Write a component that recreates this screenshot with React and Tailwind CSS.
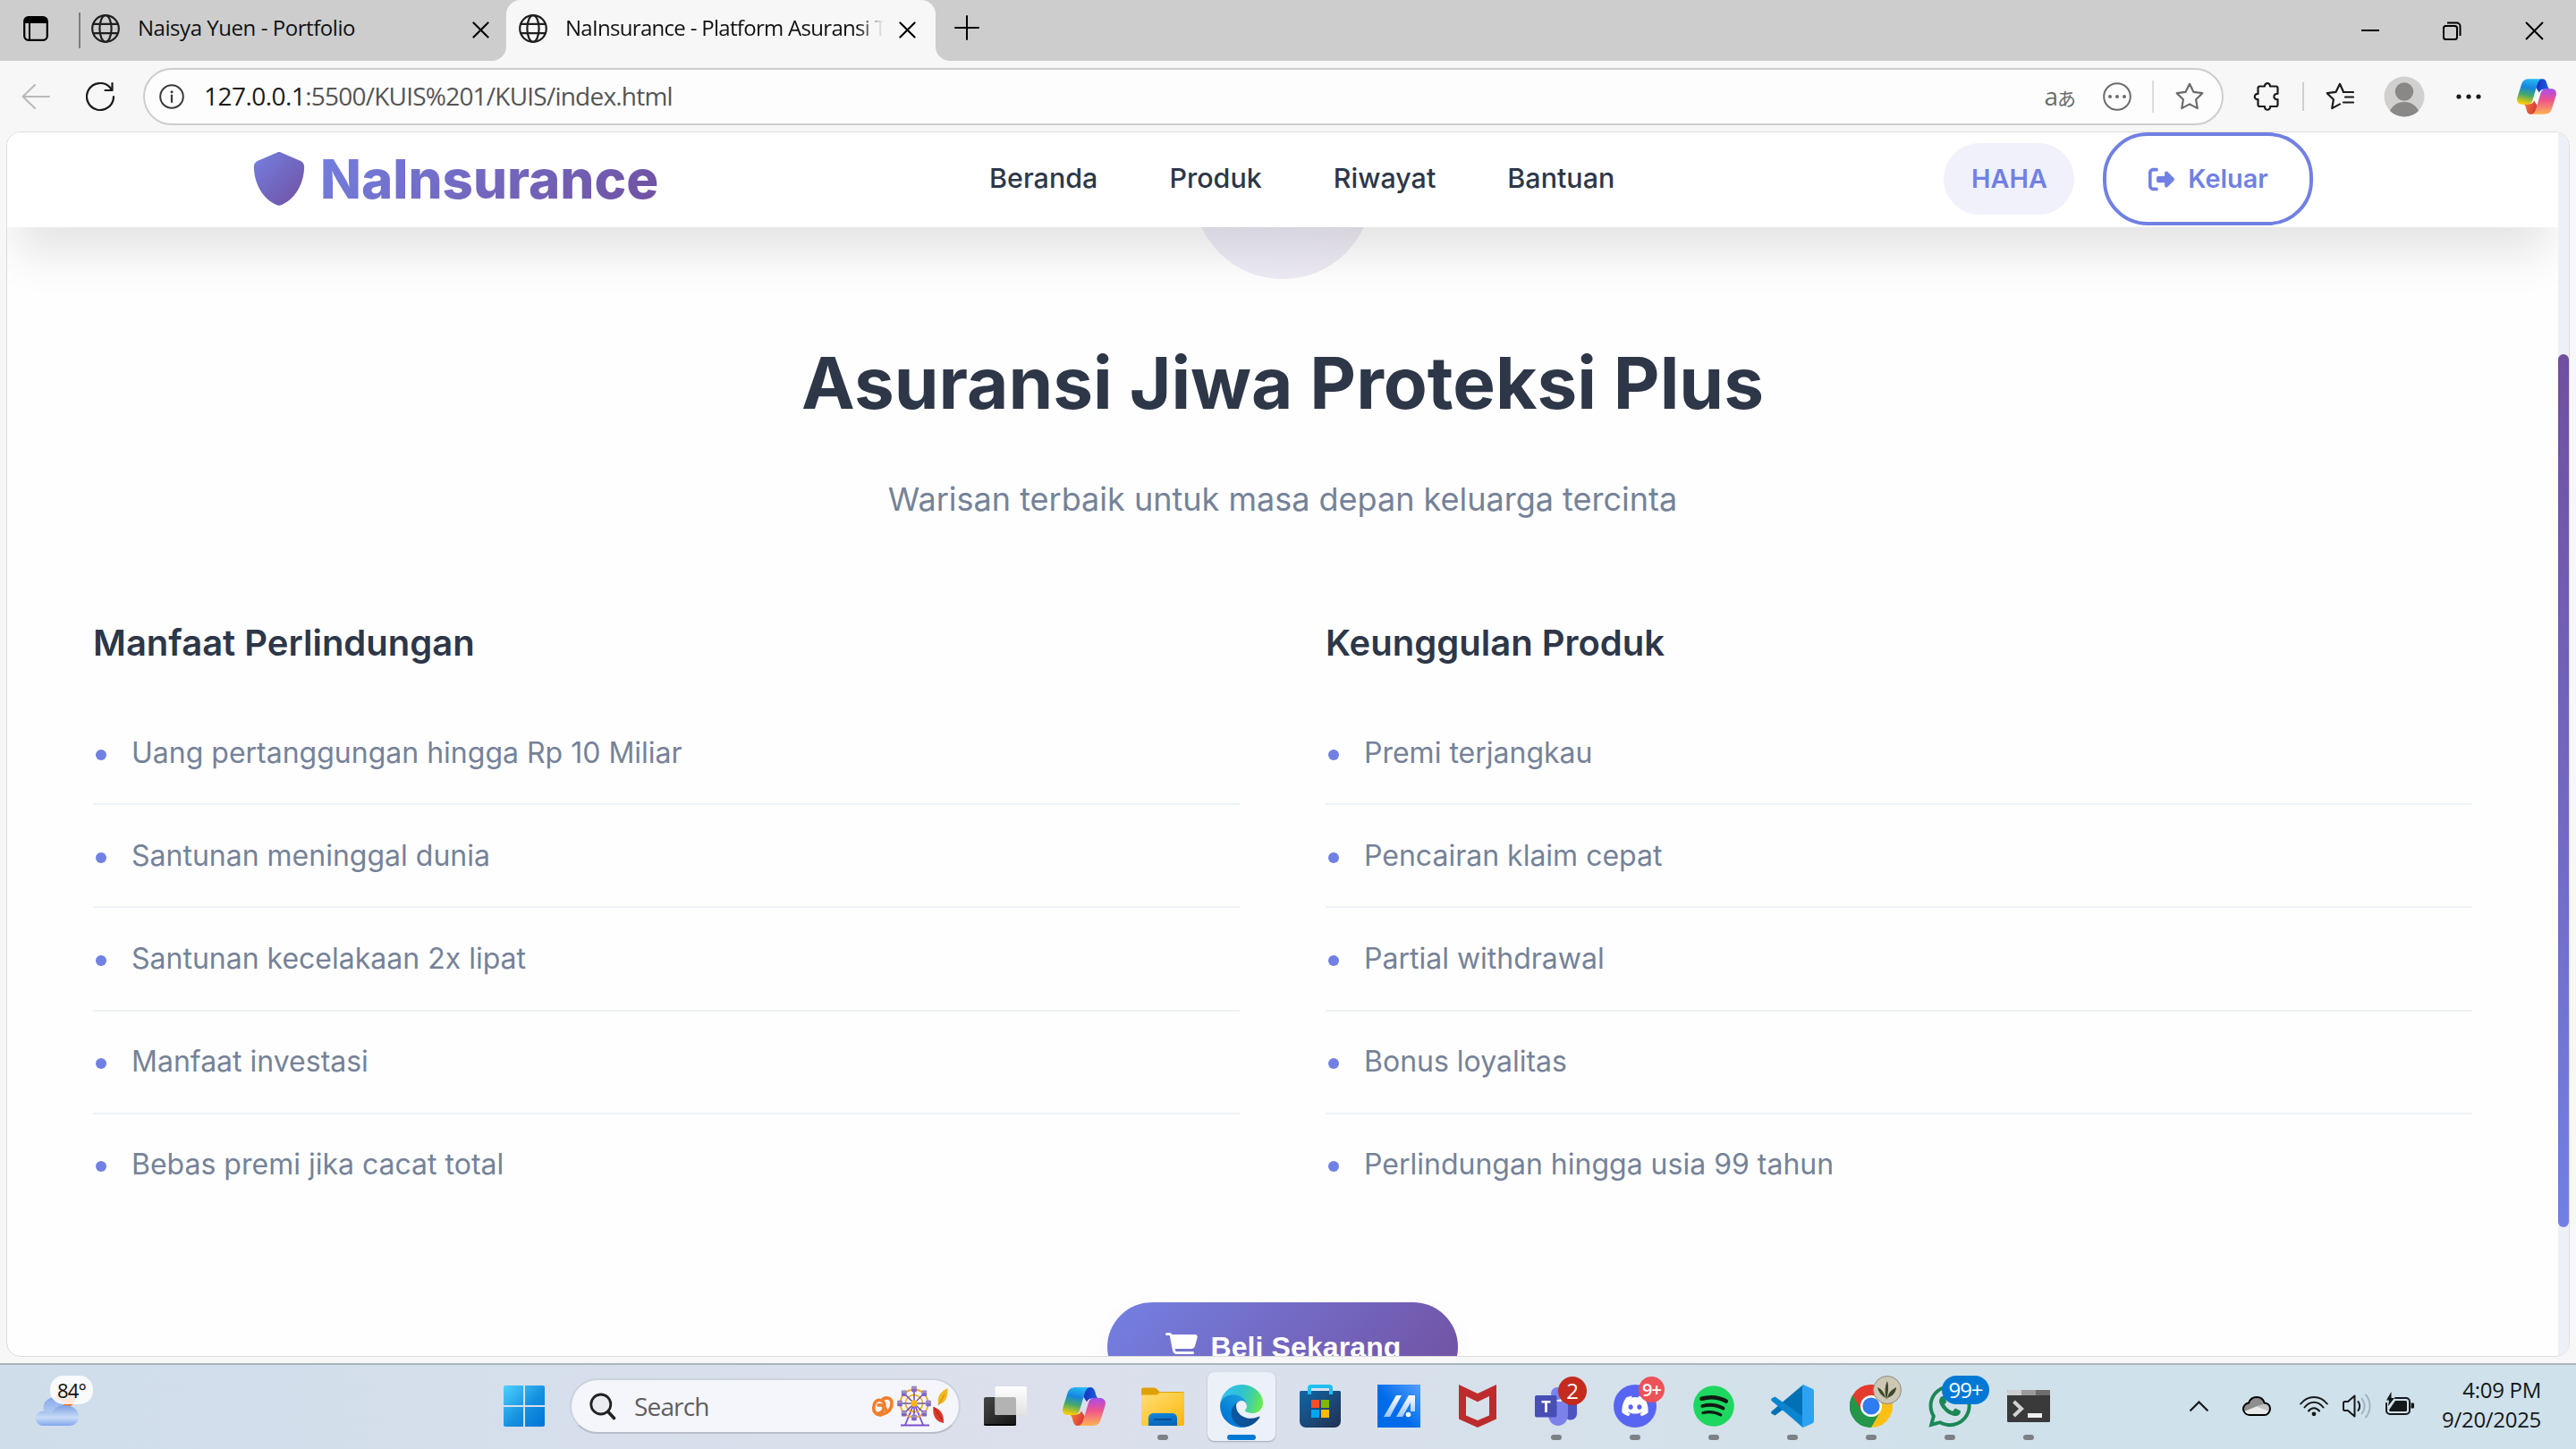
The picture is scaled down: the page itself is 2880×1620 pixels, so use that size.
import React from "react";
import { FaCartShopping, FaRightFromBracket, FaShield, FaDiscord, FaWhatsapp } from "react-icons/fa6";

/* ---------- browser chrome icons ---------- */

function Globe() {
  return (
    <svg className="size-8 shrink-0" viewBox="0 0 32 32" fill="none" stroke="#1f1f22" strokeWidth="2.2">
      <circle cx="16" cy="16" r="14.8" />
      <ellipse cx="16" cy="16" rx="6.6" ry="14.8" />
      <path d="M2.2 10.8h27.600M2.200 21.200h27.600" />
    </svg>
  );
}

function Cross({ className, width }) {
  return (
    <svg className={className} viewBox="0 0 20 20" fill="none" stroke="#000" strokeWidth={width} strokeLinecap="round">
      <path d="M1.500 1.500l17 17M18.500 1.500l-17 17" />
    </svg>
  );
}

function TabActions() {
  return (
    <svg className="w-7 h-7" viewBox="0 0 28 28" fill="none">
      <rect x="1.200" y="1.200" width="25.600" height="25.600" rx="4.500" stroke="#000" strokeWidth="2.200" />
      <path d="M1 8V5a4 4 0 0 1 4-4h18a4 4 0 0 1 4 4v3z" fill="#000" />
      <path d="M7 8v18" stroke="#000" strokeWidth="2" />
    </svg>
  );
}

function Star() {
  return (
    <svg className="w-8 h-8" viewBox="0 0 32 32" fill="none" stroke="#6b6b6b" strokeWidth="2.200" strokeLinejoin="round">
      <path d="M16 1.800l4.400 9 9.900 1.400-7.200 7 1.700 9.900L16 24.400l-8.800 4.700 1.700-9.900-7.200-7 9.900-1.400z" />
    </svg>
  );
}

function FavList() {
  return (
    <svg className="w-8 h-8" viewBox="0 0 32 32" fill="none" stroke="#1b1b1b" strokeWidth="2.200" strokeLinecap="round" strokeLinejoin="round">
      <path d="M20 10.800L16 1.800l-4.400 9-9.900 1.400 7.200 7-1.700 9.900L16 24.400" />
      <path d="M20 11h11M22 16.500h9M20 22.500h11" />
    </svg>
  );
}

function Puzzle() {
  return (
    <svg className="w-8 h-8" viewBox="0 0 32 32" fill="none" stroke="#1b1b1b" strokeWidth="2.200" strokeLinejoin="round">
      <path d="M6.500 6.500a2 2 0 0 1 2-2H14c-.3-4.500 6.300-4.500 6 0h6.500a2 2 0 0 1 2 2v6.300c-5.500-.6-5.500 7 0 6.400v5.800a2 2 0 0 1-2 2H20c.5 5-6.500 5-6 0H8.500a2 2 0 0 1-2-2v-5.800c-5 .4-5-6.800 0-6.400z" />
    </svg>
  );
}

function Copilot({ className, id }) {
  return (
    <svg className={className} viewBox="0 0 48 43">
      <defs>
        <linearGradient id={id + "a"} x1="0.600" y1="0" x2="0.400" y2="1">
          <stop offset="0" stopColor="#27baf5" />
          <stop offset="0.350" stopColor="#1586de" />
          <stop offset="0.650" stopColor="#46a96b" />
          <stop offset="1" stopColor="#f8cd05" />
        </linearGradient>
        <linearGradient id={id + "b"} x1="0.500" y1="0" x2="0.500" y2="1">
          <stop offset="0" stopColor="#a84bee" />
          <stop offset="0.450" stopColor="#ee548c" />
          <stop offset="1" stopColor="#fdb355" />
        </linearGradient>
        <linearGradient id={id + "c"} x1="0" y1="0.600" x2="1" y2="0.600">
          <stop offset="0" stopColor="#1a2fc0" />
          <stop offset="1" stopColor="#1769e0" />
        </linearGradient>
        <linearGradient id={id + "d"} x1="0" y1="0" x2="1" y2="0.400">
          <stop offset="0" stopColor="#f98a3c" />
          <stop offset="1" stopColor="#d93a34" />
        </linearGradient>
      </defs>
      <path d="M23 10C25 2 26 0 31 0c3 0 4.500 2 5.300 5l1 3.500C38 11 39 12.500 41 12.500h-8c-3 0-5 1.500-6 4z" fill={"url(#" + id + "c)"} />
      <path d="M25 33c-2 8-3 10-8 10-3 0-4.500-2-5.300-5l-1-3.500C10 32 9 30.500 7 30.500h8c3 0 5-1.500 6-4z" fill={"url(#" + id + "d)"} />
      <path d="M15 0h16.500c-4 0-5.600 3-7 7.500L19 26c-1 3-3 5-7 5H6.500C1 31-1 27 .6 22L5.500 6.500C7 2 10 0 15 0z" fill={"url(#" + id + "a)"} />
      <path d="M33 43H16.500c4 0 5.600-3 7-7.500L29 17c1-3 3-5 7-5h5.500c5.500 0 7.500 4 5.900 9L42.500 36.500C41 41 38 43 33 43z" fill={"url(#" + id + "b)"} />
    </svg>
  );
}

/* ---------- taskbar icons ---------- */

function WindowsLogo() {
  return (
    <svg className="size-[46px]" viewBox="0 0 46 46">
      <defs>
        <linearGradient id="win" x1="0" y1="0" x2="46" y2="46" gradientUnits="userSpaceOnUse">
          <stop offset="0" stopColor="#4dd2ff" />
          <stop offset="0.550" stopColor="#1590e0" />
          <stop offset="1" stopColor="#0074d4" />
        </linearGradient>
      </defs>
      <path fill="url(#win)" d="M2 0h20v22H0V2a2 2 0 0 1 2-2zM24 0h20a2 2 0 0 1 2 2v20H24zM0 24h22v22H2a2 2 0 0 1-2-2zM24 24h22v20a2 2 0 0 1-2 2H24z" />
    </svg>
  );
}

function Weather() {
  return (
    <svg className="w-12 h-10" viewBox="0 0 48 40">
      <defs>
        <linearGradient id="cl1" x1="0" y1="0" x2="0" y2="1">
          <stop offset="0" stopColor="#86a9ea" />
          <stop offset="1" stopColor="#c2d7f8" />
        </linearGradient>
        <linearGradient id="cl2" x1="0" y1="0" x2="0" y2="1">
          <stop offset="0" stopColor="#7ba0e4" />
          <stop offset="0.600" stopColor="#c9dcf8" />
          <stop offset="1" stopColor="#7fa6ee" />
        </linearGradient>
      </defs>
      <circle cx="34" cy="8" r="11" fill="#f97316" />
      <circle cx="20" cy="20" r="11.500" fill="url(#cl1)" />
      <path d="M9 23.500c3 0 6 1.500 7.500 4.500C19 22 24 17 32 17c9 0 16 5 16 12.500C48 35.500 44 40 37 40H9c-5 0-9-3.500-9-8.300 0-5 4-8.200 9-8.200z" fill="url(#cl2)" />
    </svg>
  );
}

function SearchDoodle() {
  const spokes = [0, 45, 90, 135, 180, 225, 270, 315];
  return (
    <svg className="w-[88px] h-[46px]" viewBox="0 0 88 46">
      <g fill="none" stroke="#f07f2b" strokeWidth="3.600" strokeLinecap="round">
        <path d="M12 33C5 33 3 28 4 23c1-6 5-8 9-6 4 2 3 6 2 9-1 3-4 6-7 5" />
        <path d="M13 17c3-5 11-4 11 3 0 7-5 11-10 12M9 22c3-1 7 1 9 6" />
      </g>
      <path d="M49 20l-10 24M49 20l10 24M34 44.500h32" stroke="#7c4fd0" strokeWidth="1.800" fill="none" />
      <circle cx="49" cy="20" r="15.500" fill="none" stroke="#f5a623" strokeWidth="1.800" />
      <circle cx="49" cy="20" r="9.500" fill="none" stroke="#f5a623" strokeWidth="1.600" />
      {spokes.map((a) => (
        <g key={a} transform={"rotate(" + a + " 49 20)"}>
          <path d="M49 17V5" stroke="#5b3a96" strokeWidth="1.300" />
          <rect x="46.200" y="0.800" width="5.600" height="6.400" rx="0.800" fill="#8166c4" transform={"rotate(" + -a + " 49 4)"} />
          <path d="M46.200 1.600h5.600v2h-5.600z" fill="#a79bc0" transform={"rotate(" + -a + " 49 4)"} />
        </g>
      ))}
      <circle cx="49" cy="20" r="3.800" fill="#fdb515" />
      <path d="M86.500 3C80 6 74 11 76 21c8-1 11-8 10.500-18z" fill="#f3b81f" />
      <path d="M76 22l7-12" stroke="#c98a12" strokeWidth="1" />
      <path d="M70.500 24c8 2 12 8 11.500 18-8-1-13-8-11.500-18z" fill="#d93a2b" />
      <path d="M71 24l9 14" stroke="#9c1f18" strokeWidth="1" />
    </svg>
  );
}

function TaskView() {
  return (
    <svg className="w-12 h-11" viewBox="0 0 48 44">
      <defs>
        <linearGradient id="tv1" x1="0" y1="0" x2="1" y2="1">
          <stop offset="0" stopColor="#454545" />
          <stop offset="1" stopColor="#161616" />
        </linearGradient>
        <linearGradient id="tv2" x1="0" y1="0" x2="0" y2="1">
          <stop offset="0" stopColor="#ffffff" />
          <stop offset="1" stopColor="#e2e2e2" />
        </linearGradient>
      </defs>
      <rect x="0" y="12" width="36" height="32" rx="2" fill="url(#tv1)" />
      <path d="M0 42h36a2 2 0 0 1-2 2H2a2 2 0 0 1-2-2z" fill="#000" />
      <rect x="12.500" y="0" width="35.500" height="32" rx="1.500" fill="url(#tv2)" />
      <path d="M12.500 12H34a2 2 0 0 1 2 2v18H14a1.500 1.500 0 0 1-1.500-1.500z" fill="#b3b3b3" />
    </svg>
  );
}

function Explorer() {
  return (
    <svg className="w-12 h-[43px]" viewBox="0 0 48 43">
      <defs>
        <linearGradient id="ex1" x1="0" y1="0" x2="1" y2="1">
          <stop offset="0" stopColor="#ffdd78" />
          <stop offset="0.600" stopColor="#fdc836" />
          <stop offset="1" stopColor="#f5b60a" />
        </linearGradient>
        <linearGradient id="ex2" x1="0" y1="0" x2="0.300" y2="1">
          <stop offset="0" stopColor="#1287de" />
          <stop offset="1" stopColor="#0565b8" />
        </linearGradient>
      </defs>
      <path d="M0 2.500A2 2 0 0 1 2 .5h11.500c2 0 3 .5 4.300 1.800l2.700 2.700H46a2 2 0 0 1 2 2V12H0z" fill="#e0a100" />
      <path d="M0 8.500h15.500c1.500 0 2.300-.4 3.400-1.300L20.500 6H46a2 2 0 0 1 2 2v33a2 2 0 0 1-2 2H2a2 2 0 0 1-2-2z" fill="url(#ex1)" />
      <path d="M8 43v-8c0-4 2.500-6 6-6h20c3.500 0 6 2 6 6v8z" fill="url(#ex2)" />
      <path d="M15 36h18" stroke="#0a4c8d" strokeWidth="2.200" strokeLinecap="round" />
    </svg>
  );
}

function Edge() {
  return (
    <svg className="size-12" viewBox="0 0 256 256">
      <defs>
        <linearGradient id="ed1" x1="63.300" y1="84" x2="241.700" y2="84" gradientTransform="matrix(1 0 0 -1 0 266)" gradientUnits="userSpaceOnUse">
          <stop offset="0" stopColor="#0c59a4" />
          <stop offset="1" stopColor="#114a8b" />
        </linearGradient>
        <linearGradient id="ed2" x1="157.300" y1="161.400" x2="46" y2="40.100" gradientTransform="matrix(1 0 0 -1 0 266)" gradientUnits="userSpaceOnUse">
          <stop offset="0" stopColor="#1b9de2" />
          <stop offset="0.200" stopColor="#1595df" />
          <stop offset="0.700" stopColor="#0680d7" />
          <stop offset="1" stopColor="#0078d4" />
        </linearGradient>
        <linearGradient id="ed3" x1="10" y1="60" x2="240" y2="130" gradientUnits="userSpaceOnUse">
          <stop offset="0" stopColor="#35c1f1" />
          <stop offset="0.450" stopColor="#2fc2d0" />
          <stop offset="0.750" stopColor="#45d39a" />
          <stop offset="1" stopColor="#66eb50" />
        </linearGradient>
      </defs>
      <path fill="url(#ed1)" d="M231 190.500c-3.400 1.800-6.900 3.400-10.500 4.700a101.700 101.700 0 0 1-35.900 6.500c-47.300 0-88.500-32.500-88.500-74.300a31.500 31.500 0 0 1 16.400-27.300c-42.800 1.800-53.800 46.400-53.800 72.500 0 73.900 68.100 81.400 82.800 81.400 7.900 0 19.800-2.300 27-4.600l1.300-.4a128.300 128.300 0 0 0 66.600-52.800 4 4 0 0 0-5.400-5.700z" />
      <path fill="url(#ed2)" d="M105.700 241.400a79.200 79.200 0 0 1-22.700-21.300 80.700 80.700 0 0 1 29.500-120c3.200-1.500 8.500-4.100 15.600-4a32.400 32.400 0 0 1 25.700 13 31.900 31.900 0 0 1 6.300 18.700c0-.2 24.500-79.600-80-79.600-43.900 0-80 41.700-80 78.200a130.200 130.200 0 0 0 12.100 56 128 128 0 0 0 156.400 67 75.500 75.500 0 0 1-62.800-8z" />
      <path fill="url(#ed3)" d="M152.300 148.900c-.9 1-3.400 2.500-3.400 5.600 0 2.600 1.700 5.200 4.800 7.300 14.300 10 41.400 8.600 41.500 8.600a59.600 59.600 0 0 0 30.300-8.300 61.400 61.400 0 0 0 30.400-52.900c.3-22.400-8-37.300-11.300-43.900C223.500 23.900 177.700 0 128 0A128 128 0 0 0 0 126.200c.5-36.500 36.800-66 80-66 3.500 0 23.500.3 42 10.100 16.300 8.600 24.900 18.900 30.800 29.200 6.200 10.700 7.300 24.100 7.300 29.500s-2.700 13.300-7.800 19.900z" />
    </svg>
  );
}

function Store() {
  return (
    <svg className="w-[46px] h-12" viewBox="0 0 46 48">
      <defs>
        <linearGradient id="st" x1="0" y1="0" x2="1" y2="1">
          <stop offset="0" stopColor="#1166a8" />
          <stop offset="1" stopColor="#22304f" />
        </linearGradient>
      </defs>
      <path d="M0 8.500A1.500 1.500 0 0 1 1.500 7h43A1.500 1.500 0 0 1 46 8.500V41a7 7 0 0 1-7 7H7a7 7 0 0 1-7-7z" fill="url(#st)" />
      <path d="M11 11V4a2 2 0 0 1 2-2h20a2 2 0 0 1 2 2v7" fill="none" stroke="#22bdf0" strokeWidth="4" />
      <path d="M13 17h9v9h-9z" fill="#f25022" />
      <path d="M24 17h9v9h-9z" fill="#7fba00" />
      <path d="M13 28h9v9h-9z" fill="#00a4ef" />
      <path d="M24 28h9v9h-9z" fill="#ffb900" />
    </svg>
  );
}

function Asus() {
  return (
    <svg className="size-12" viewBox="0 0 48 48">
      <defs>
        <linearGradient id="as1" x1="1" y1="0" x2="0.400" y2="0.550">
          <stop offset="0" stopColor="#559fff" />
          <stop offset="1" stopColor="#006be8" />
        </linearGradient>
        <linearGradient id="as2" x1="0" y1="1" x2="0" y2="0">
          <stop offset="0" stopColor="#9cc6fa" />
          <stop offset="1" stopColor="#ffffff" />
        </linearGradient>
      </defs>
      <path d="M0 0h48v48H0z" fill="url(#as1)" />
      <path d="M7 36l14-24h6L14 36z" fill="url(#as2)" />
      <path d="M21 36l14-24h7v18h-5V20l-9 16z" fill="url(#as2)" />
      <circle cx="34.500" cy="33.500" r="2.800" fill="#fff" />
    </svg>
  );
}

function McAfee() {
  return (
    <svg className="w-[42px] h-12" viewBox="0 0 42 48">
      <path fillRule="evenodd" fill="#bd2c2c" d="M0 0l21 10L42 0v38.500L21 48 0 38.500zM8 13v21.500l13 5.500 13-5.500V13l-13 6.300z" />
    </svg>
  );
}

function Teams() {
  return (
    <svg className="w-12 h-[43px]" viewBox="0 0 48 43">
      <circle cx="25" cy="7" r="7" fill="#7b83eb" />
      <path d="M34 15h13v15a7 7 0 0 1-13 3z" fill="#4c54bf" />
      <path d="M15 15h22v15.500C37 38 32 43 26 43s-11-5-11-12.500z" fill="#7b83eb" />
      <path d="M22 14h8v2h-8z" fill="#e6e9f8" />
      <rect x="0" y="9" width="24.500" height="24.500" rx="2" fill="#474fb5" />
      <path d="M7.500 15h10v2.600h-3.600V28h-2.800V17.600H7.500z" fill="#fff" />
    </svg>
  );
}

function Spotify() {
  return (
    <svg className="size-[46px]" viewBox="0 0 46 46">
      <circle cx="23" cy="23" r="22.800" fill="#1ed760" />
      <g fill="none" stroke="#0f1a12" strokeLinecap="round">
        <path d="M9.500 14.800c9-2.600 19.500-1.600 27.300 2.700" strokeWidth="4.600" />
        <path d="M10.300 23c8-2.200 16.500-1.200 23.300 2.500" strokeWidth="3.800" />
        <path d="M11 30.500c7-1.700 14-.9 19.800 2.400" strokeWidth="3.200" />
      </g>
    </svg>
  );
}

function VsCode() {
  return (
    <svg className="size-12" viewBox="0 0 48 48">
      <path d="M35.500 48L14 27.500 4.500 34.500 1 32.700c-1.200-.8-1.200-2-.2-3L36 0v12.500z" fill="#0170b5" />
      <path d="M4.500 13.500L36 36v12L.8 18.300c-1-1-1-2.200.2-3z" fill="#0a84d0" />
      <path d="M36 0l10 4.500a3 3 0 0 1 2 2.800v33.400a3 3 0 0 1-2 2.800L36 48c-.6 0-1-.4-1-1V1c0-.6.4-1 1-1z" fill="#2ba3f2" />
    </svg>
  );
}

function Chrome() {
  return (
    <svg className="size-12" viewBox="0 0 48 48">
      <path d="M24 24L3.200 12A24 24 0 0 1 44.800 12z" fill="#e33b2e" />
      <path d="M24 24L44.800 12A24 24 0 0 1 24 48z" fill="#fcc015" />
      <path d="M24 24v0L24 48A24 24 0 0 1 3.200 12z" fill="#23964a" />
      <path d="M24 12h20.800L34.400 30 24 24z" fill="#fcc015" />
      <path d="M3.200 12L13.600 30 24 24V12z" fill="#e33b2e" />
      <path d="M3.200 12L13.600 30A12 12 0 0 0 34.400 30L24 48A24 24 0 0 1 3.200 12z" fill="#23964a" />
      <circle cx="24" cy="24" r="12" fill="#fff" />
      <circle cx="24" cy="24" r="9.600" fill="#2f7bf0" />
    </svg>
  );
}

function ChromeProfile() {
  return (
    <svg className="size-8" viewBox="0 0 32 32">
      <circle cx="16" cy="16" r="15.500" fill="#cdc7b5" stroke="#8f8a7b" />
      <g fill="#3d4a2a">
        <path d="M15 27c-2-8-2-15 1-21 2 6 1 14-1 21z" />
        <path d="M14 25C9 22 6 18 5 13c5 2 8 7 9 12z" />
        <path d="M16 25c1-5 4-9 10-12 0 5-4 10-10 12z" />
      </g>
    </svg>
  );
}

function Terminal() {
  return (
    <svg className="w-12 h-9" viewBox="0 0 48 36">
      <rect width="48" height="36" rx="1.500" fill="#3a3a3a" />
      <path d="M0 1.500A1.500 1.500 0 0 1 1.500 0H16v6H0z" fill="#cfcfcf" />
      <path d="M16 0h16v6H16z" fill="#9a9a9a" />
      <path d="M32 0h14.500A1.500 1.500 0 0 1 48 1.500V6H32z" fill="#6d6d6d" />
      <path d="M7.500 13l8.500 8-8.500 8" fill="none" stroke="#d4d4d4" strokeWidth="4" />
      <path d="M23 26h16v5H23z" fill="#f0f0f0" />
    </svg>
  );
}

function TrayCloud() {
  return (
    <svg className="w-8 h-[22px]" viewBox="0 0 32 22">
      <path d="M8 21a7 7 0 0 1-7-6.500C1 10.500 4 8 7 7.500 8.500 3.500 12 1 16 1c4.200 0 7.500 2.500 8.700 6.500C28.500 7.700 31 10.500 31 14s-2.800 7-6.500 7z" fill="#8d8d8d" />
      <path d="M2 17l16-6.500 12.500 6.500c-1 2.500-3 4-6 4H8c-3 0-5-1.500-6-4z" fill="#e9e9e9" />
      <path d="M16 11.500l9-3.500c4 0 6 3 6 6l-.8 3z" fill="#c4c4c4" />
      <path d="M8 21a7 7 0 0 1-7-6.500C1 10.500 4 8 7 7.500 8.500 3.500 12 1 16 1c4.200 0 7.500 2.500 8.700 6.500C28.500 7.700 31 10.500 31 14s-2.800 7-6.500 7z" fill="none" stroke="#000" strokeWidth="2" />
    </svg>
  );
}

function Wifi() {
  return (
    <svg className="w-8 h-6" viewBox="0 0 32 24" fill="none" stroke="#15181b" strokeWidth="2" strokeLinecap="round">
      <path d="M1.200 9.500c8-10 21.600-10 29.600 0M5.500 13.500c6-7.600 15-7.600 21 0M10 17.500c3.500-4.300 8.500-4.300 12 0" />
      <circle cx="16" cy="20.800" r="2.400" fill="#15181b" stroke="none" />
    </svg>
  );
}

function Volume() {
  return (
    <svg className="w-8 h-7" viewBox="0 0 32 28" fill="none" strokeWidth="2" strokeLinecap="round" strokeLinejoin="round">
      <path d="M1 10.500a1.500 1.500 0 0 1 1.500-1.500H6l7.500-6.500v23L6 19H2.500A1.500 1.500 0 0 1 1 17.500zM17.500 9c2 3 2 7 0 10" stroke="#15181b" />
      <path d="M21.500 5.500c4 5 4 12 0 17M26 1.500c6 7 6 18 0 25" stroke="#a5b5be" />
    </svg>
  );
}

function Battery() {
  return (
    <svg className="w-8 h-7" viewBox="0 0 32 28">
      <path d="M11 7h12a4 4 0 0 1 4 4v10a4 4 0 0 1-4 4H5a4 4 0 0 1-4-4V13" fill="none" stroke="#15181b" strokeWidth="2" strokeLinecap="round" />
      <path d="M11 10h11.500a1.500 1.500 0 0 1 1.500 1.500v9a1.500 1.500 0 0 1-1.500 1.500h-17a1.500 1.500 0 0 1-1-2.500z" fill="#15181b" />
      <path d="M28.500 12.500H31a1 1 0 0 1 1 1v4a1 1 0 0 1-1 1h-2.500z" fill="#15181b" />
      <path d="M6.500 0L1 9.500h3L3 16l7-9H6.500z" fill="#15181b" />
    </svg>
  );
}

/* ---------- sections ---------- */

function TabStrip() {
  return (
    <div className="flex h-[68px] bg-[#cdcdcd]">
      <div className="flex w-[88px] items-center pl-[26px] pb-1">
        <TabActions />
      </div>
      <div className="flex w-[478px] items-center pb-1">
        <div className="mt-1 mr-3 h-10 w-0.5 bg-[#7d7d7d]" />
        <Globe />
        <span className="ml-5 -mt-[2px] grow text-[24px] tracking-[-0.450px] whitespace-nowrap text-[#111]">Naisya Yuen - Portfolio</span>
        <Cross className="mt-0.5 mr-[19px] size-[19px]" width="2.200" />
      </div>
      <div className="relative flex w-[480px] items-center rounded-t-[16px] bg-[#f7f7f7] pb-1">
        <svg className="absolute bottom-0 -left-4 size-4" viewBox="0 0 16 16"><path d="M16 0v16H0A16 16 0 0 0 16 0z" fill="#f7f7f7" /></svg>
        <svg className="absolute -right-4 bottom-0 size-4" viewBox="0 0 16 16"><path d="M0 0v16h16A16 16 0 0 1 0 0z" fill="#f7f7f7" /></svg>
        <div className="w-3.5" />
        <Globe />
        <div className="ml-5 -mt-[2px] w-[356px] overflow-hidden mask-r-from-92% text-[24px] tracking-[-0.700px] whitespace-nowrap text-[#111]">NaInsurance - Platform Asuransi T</div>
        <Cross className="mt-0.5 ml-[17px] size-[19px]" width="2.200" />
      </div>
      <div className="flex grow items-center justify-between pb-1">
        <svg className="ml-[21px] -mt-0.5 size-7" viewBox="0 0 28 28" stroke="#000" strokeWidth="2" strokeLinecap="round"><path d="M14 1v26M1 14h26" /></svg>
        <div className="mt-1 flex items-center pr-9">
          <div className="h-0.5 w-5 bg-black" />
          <svg className="ml-[71px] size-[21px]" viewBox="0 0 21 21" fill="none" stroke="#000" strokeWidth="2"><rect x="1" y="5" width="15" height="15" rx="2.500" /><path d="M5 1.500h10.500a4 4 0 0 1 4 4V16" /></svg>
          <Cross className="ml-[71px] size-[21px]" width="1.900" />
        </div>
      </div>
    </div>
  );
}

function Toolbar() {
  return (
    <div className="flex h-20 items-center bg-[#f7f7f7]">
      <svg className="ml-6 h-7 w-8" viewBox="0 0 32 28" fill="none" stroke="#b9b9b9" strokeWidth="2" strokeLinecap="round" strokeLinejoin="round"><path d="M15 1L1.500 14 15 27M2 14h29" /></svg>
      <svg className="ml-10 size-8" viewBox="0 0 32 32" fill="none" stroke="#1b1b1b" strokeWidth="2.200" strokeLinecap="round" strokeLinejoin="round"><path d="M31 16A15 15 0 1 1 27 5.800L29 8.500M29.500 1.200V9h-8" /></svg>
      <div className="ml-8 flex h-16 w-[2326px] items-center rounded-full border-2 border-[#cdcdcd] bg-[#fdfdfd]">
        <svg className="ml-4 size-7" viewBox="0 0 28 28" fill="none" stroke="#3a3a3a" strokeWidth="2"><circle cx="14" cy="14" r="12.800" /><path d="M14 12.500V20" strokeWidth="2.200" strokeLinecap="round" /><circle cx="14" cy="8.700" r="1.500" fill="#3a3a3a" stroke="none" /></svg>
        <div className="mb-[2px] ml-[22px] grow text-[28px] tracking-[-0.780px] whitespace-nowrap text-[#555]"><span className="tracking-[-0.550px] text-[#1b1b1b]">127.0.0.1</span>:5500/KUIS%201/KUIS/index.html</div>
        <div className="mr-[30px] flex items-baseline text-[#6b6b6b]">
          <span className="text-[28px] leading-8">a</span>
          <span className="-ml-px text-[21px] leading-8 font-['Noto_Sans_CJK_JP',sans-serif]">あ</span>
        </div>
        <svg className="mr-[23px] size-8" viewBox="0 0 32 32" fill="none" stroke="#6b6b6b" strokeWidth="2"><circle cx="16" cy="16" r="14.800" /><g fill="#6b6b6b" stroke="none"><circle cx="8" cy="16" r="2" /><circle cx="16" cy="16" r="2" /><circle cx="24" cy="16" r="2" /></g></svg>
        <div className="mr-6 h-9 w-0.5 bg-[#dcdcdc]" />
        <div className="mr-5"><Star /></div>
      </div>
      <div className="ml-[32px]"><Puzzle /></div>
      <div className="ml-[24px] h-8 w-0.5 bg-[#cfcfcf]" />
      <div className="ml-[24px]"><FavList /></div>
      <svg className="ml-[33px] size-[46px]" viewBox="0 0 46 46"><defs><clipPath id="av"><circle cx="23" cy="23" r="22.500" /></clipPath></defs><circle cx="23" cy="23" r="22.500" fill="#d2d0ce" /><g clipPath="url(#av)" fill="#8a8886"><circle cx="23" cy="17.500" r="10.200" /><ellipse cx="23" cy="44" rx="17" ry="15" /></g></svg>
      <svg className="ml-[35px] h-2 w-7" viewBox="0 0 28 8" fill="#1b1b1b"><circle cx="3" cy="4" r="2.600" /><circle cx="14" cy="4" r="2.600" /><circle cx="25" cy="4" r="2.600" /></svg>
      <Copilot className="ml-[40px] h-10 w-11" id="tb" />
    </div>
  );
}

function NavBar() {
  return (
    <header className="relative z-10 flex h-[106px] items-center bg-white/98 pb-[2px] pl-[274px] shadow-[0_40px_50px_-10px_rgba(0,0,0,0.1)]">
      <div className="flex w-[824px] items-center">
        <FaShield className="size-[60px]" fill="url(#brand)" />
        <span className="ml-4 bg-linear-135 from-[#727fe0] to-[#7050a0] bg-clip-text text-[60px] leading-[72px] font-extrabold text-transparent">NaInsurance</span>
      </div>
      <nav className="flex w-[1067px] gap-20 text-[30.400px] font-medium tracking-[0.050px] text-[#2d3748]">
        <a>Beranda</a>
        <a>Produk</a>
        <a>Riwayat</a>
        <a>Bantuan</a>
      </nav>
      <div className="flex items-center gap-8 text-[28.800px] font-semibold text-[#7180e3]">
        <div className="flex h-20 w-[146px] items-center justify-center rounded-[40px] bg-[#f1f1fc] pl-px">HAHA</div>
        <button className="flex h-[104px] w-[235px] items-center justify-center gap-[15px] rounded-[50px] border-4 border-[#7180e3] bg-white pl-px">
          <FaRightFromBracket className="size-[29px]" />
          Keluar
        </button>
      </div>
    </header>
  );
}

function FeatureList({ title, items }) {
  return (
    <div>
      <h3 className="text-[40px] leading-[48px] font-semibold text-[#2d3748]">{title}</h3>
      <ul className="mt-[42px]">
        {items.map((t) => (
          <li key={t} className="flex h-[115.200px] items-center border-b-2 border-[#edf2f7] text-[32px] text-[#758298] last:border-transparent">
            <span className="mt-1 mr-7 ml-[3px] size-3 rounded-full bg-[#7180e3]" />
            {t}
          </li>
        ))}
      </ul>
    </div>
  );
}

function Page() {
  return (
    <div className="mx-[7px] flex h-[1370px] overflow-hidden rounded-[16px] border border-[#dcdcdc] bg-[#fefefe] font-['Inter',sans-serif]">
      <div className="h-full w-[2852px] overflow-hidden">
        <NavBar />
        <main className="-mt-[142px] flex flex-col items-center">
          <div className="size-[200px] shrink-0 rounded-full bg-linear-135 from-[#7180e3]/12 to-[#7050a0]/12" />
          <h1 className="mt-[68px] text-[80px] leading-[96px] font-bold whitespace-nowrap text-[#2d3748]">Asuransi Jiwa Proteksi Plus</h1>
          <p className="mt-[53px] text-[36px] leading-[58px] text-[#758298]">Warisan terbaik untuk masa depan keluarga tercinta</p>
          <div className="mt-[108px] grid w-[2660px] grid-cols-2 gap-24">
            <FeatureList title="Manfaat Perlindungan" items={["Uang pertanggungan hingga Rp 10 Miliar", "Santunan meninggal dunia", "Santunan kecelakaan 2x lipat", "Manfaat investasi", "Bebas premi jika cacat total"]} />
            <FeatureList title="Keunggulan Produk" items={["Premi terjangkau", "Pencairan klaim cepat", "Partial withdrawal", "Bonus loyalitas", "Perlindungan hingga usia 99 tahun"]} />
          </div>
          <button className="mt-[95px] flex h-[100px] w-[392px] shrink-0 items-center justify-center gap-[15px] rounded-[50px] bg-linear-135 from-[#7380e3] to-[#7050a0] pl-px font-['Liberation_Sans',Arial,sans-serif] text-[32px] font-bold tracking-[0.100px] text-white shadow-[0_8px_30px_rgba(0,0,0,0.03)]">
            <FaCartShopping className="h-8 w-9" />
            Beli Sekarang
          </button>
        </main>
      </div>
      <div className="h-full w-3 bg-[#edf1f7] pt-[248px]">
        <div className="h-[976px] w-3 rounded-full bg-linear-to-b from-[#704f9f] to-[#7180e3]" />
      </div>
    </div>
  );
}

function TaskButton({ children, running, active }) {
  return (
    <div className="relative flex h-full w-[88px] items-center justify-center">
      {active && <div className="absolute top-2 left-[6px] h-[77px] w-[76px] rounded-lg bg-[#ecf0f8] shadow-[0_1px_2px_rgba(0,0,0,0.25)]" />}
      <div className="relative">{children}</div>
      {running && <div className="absolute top-[78px] left-[38px] h-1.5 w-3 rounded-full bg-[#7c8186]" />}
      {active && <div className="absolute top-[78px] left-7 h-1.5 w-8 rounded-full bg-[#0078d4]" />}
    </div>
  );
}

function Taskbar() {
  return (
    <div className="h-24 border-t-2 border-[#a9b4bb] bg-linear-to-r from-[#cfddeb] from-0% via-[#dce0ec] via-40% to-[#cfe1ea] to-80%">
      <div className="flex h-[92px] items-center">
        <div className="relative h-full w-[542px]">
          <div className="absolute top-7 left-10"><Weather /></div>
          <div className="absolute top-3 left-14 flex h-8 w-12 items-center justify-center rounded-[15px] bg-white/85 text-[22px] tracking-[-0.800px] text-[#111]">84°</div>
        </div>
        <TaskButton><WindowsLogo /></TaskButton>
        <div className="mr-1.5 ml-[7px] flex h-[62px] w-[437px] items-center rounded-full border-2 border-[#cdd2de] border-b-[#b8bdc9] bg-[#f4f6fb]">
          <svg className="ml-5 h-[31px] w-[30px]" viewBox="0 0 30 31" fill="none" stroke="#222" strokeLinecap="round"><circle cx="12.800" cy="13" r="11" strokeWidth="2.800" fill="#e9ebf0" /><path d="M21 21.500l6.500 7" strokeWidth="3.600" /></svg>
          <span className="ml-[20px] grow text-[28px] tracking-[-0.850px] text-[#5e5e5e]">Search</span>
          <div className="mr-[11px]"><SearchDoodle /></div>
        </div>
        <TaskButton><TaskView /></TaskButton>
        <TaskButton><Copilot className="h-[43px] w-12" id="tk" /></TaskButton>
        <TaskButton running><Explorer /></TaskButton>
        <TaskButton active><Edge /></TaskButton>
        <TaskButton><Store /></TaskButton>
        <TaskButton><Asus /></TaskButton>
        <TaskButton><McAfee /></TaskButton>
        <TaskButton running>
          <Teams />
          <div className="absolute -top-[12px] left-[26px] flex size-8 items-center justify-center rounded-full bg-[#c42b1c] text-[24px] text-white">2</div>
        </TaskButton>
        <TaskButton running>
          <div className="flex size-12 items-center justify-center rounded-full bg-[#5865f2]"><FaDiscord className="size-8 text-white" /></div>
          <div className="absolute -top-[9px] left-7 flex size-[29px] items-center justify-center rounded-full bg-[#ec5257] text-[20px] font-semibold tracking-[-1px] text-white">9+</div>
        </TaskButton>
        <TaskButton running><Spotify /></TaskButton>
        <TaskButton running><VsCode /></TaskButton>
        <TaskButton running>
          <Chrome />
          <div className="absolute -top-[10px] left-[26px]"><ChromeProfile /></div>
        </TaskButton>
        <TaskButton running>
          <FaWhatsapp className="size-[54px] text-[#1b8755]" />
          <div className="absolute -top-[7px] left-[18px] flex h-8 w-[53px] items-center justify-center rounded-full bg-[#0078d4] text-[24px] tracking-[-1px] text-white">99+</div>
        </TaskButton>
        <TaskButton running><Terminal /></TaskButton>
        <svg className="ml-[136px] h-3 w-[21px]" viewBox="0 0 21 12" fill="none" stroke="#15181b" strokeWidth="2.200" strokeLinecap="round"><path d="M1.200 10.800L10.500 1.500l9.300 9.300" /></svg>
        <div className="ml-[38px]"><TrayCloud /></div>
        <div className="ml-8"><Wifi /></div>
        <div className="ml-4"><Volume /></div>
        <div className="-mt-1 ml-4"><Battery /></div>
        <div className="-mt-[3px] w-[142px] text-right text-[24px] leading-[32.500px] tracking-[-0.300px] whitespace-nowrap text-[#15181b]">
          <div>4:09 PM</div>
          <div>9/20/2025</div>
        </div>
      </div>
    </div>
  );
}

export default function App() {
  return (
    <div className="flex h-[1620px] w-[2880px] flex-col overflow-hidden bg-[#f7f7f7] font-['Open_Sans',sans-serif]">
      <svg className="absolute size-0"><defs><linearGradient id="brand" x1="0" y1="0" x2="1" y2="1"><stop offset="0" stopColor="#7480e2" /><stop offset="1" stopColor="#7050a0" /></linearGradient></defs></svg>
      <TabStrip />
      <div className="-mb-px"><Toolbar /></div>
      <div className="mb-[7px]"><Page /></div>
      <Taskbar />
    </div>
  );
}
